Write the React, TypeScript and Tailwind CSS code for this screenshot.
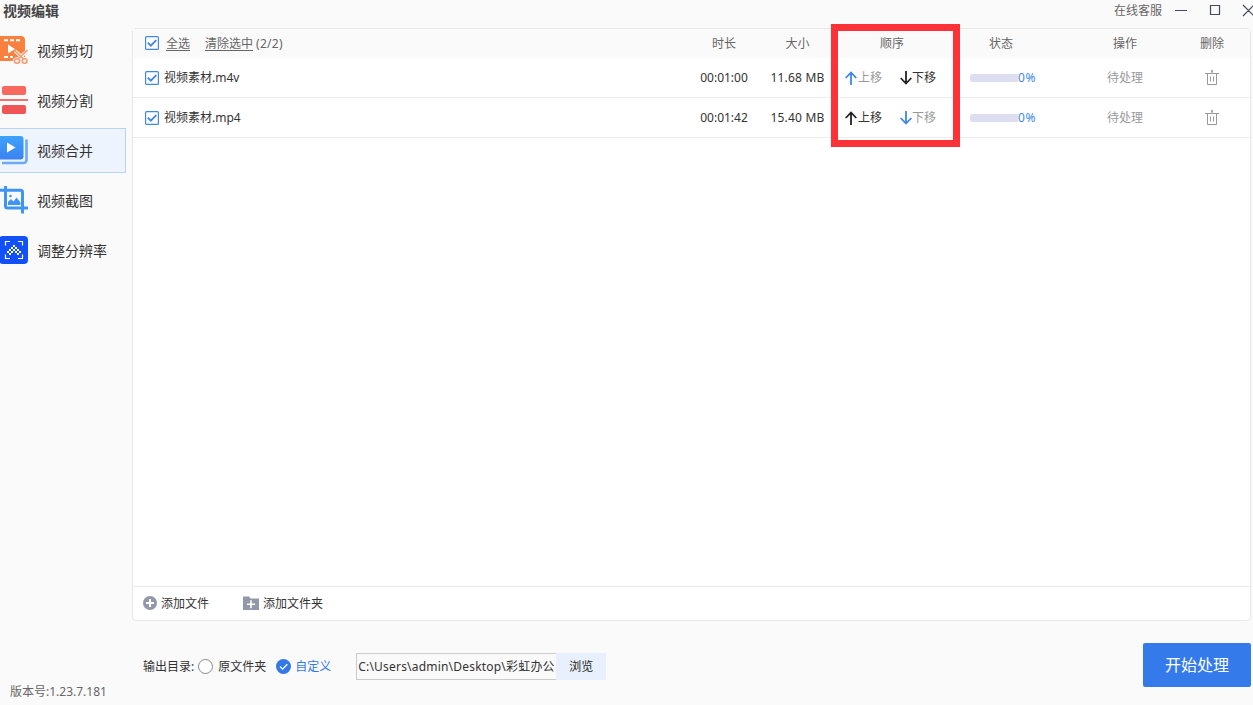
import React, { useState } from "react";
import clsx from "clsx";

type IconProps = { className?: string };

const CutIcon = () => (
  <svg width="28" height="30" viewBox="0 0 28 30" className="shrink-0">
    <rect x="-3" y="1" width="28" height="25" rx="4" fill="#f9803f" />
    <path d="M4 5.200h4M10 5.200h4M16 5.200h4M4 22h4M10 22h3" stroke="#fff" strokeWidth="2" />
    <path d="M8 9.500l7 4.500-7 4.500z" fill="#fff" />
    <g fill="none" stroke="#fdf3ee" strokeWidth="3.600">
      <path d="M15 16l9 8M27 16l-9 8" />
      <ellipse cx="17" cy="26" rx="2.600" ry="2" />
      <ellipse cx="24.600" cy="26" rx="2.600" ry="2" />
    </g>
    <g fill="none" stroke="#f79a72" strokeWidth="1.500">
      <path d="M14 15l9.500 9M27.500 15l-9.500 9" />
      <ellipse cx="17" cy="26" rx="2.600" ry="2.200" />
      <ellipse cx="24.600" cy="26" rx="2.400" ry="2.200" />
    </g>
  </svg>
);

const SplitIcon = () => (
  <svg width="28" height="30" viewBox="0 0 28 30" className="shrink-0">
    <rect x="2" y="1" width="24" height="9" rx="2" fill="#f8685f" />
    <rect x="0" y="14" width="28" height="2" fill="#f2726e" />
    <rect x="2" y="20" width="24" height="9" rx="2" fill="#ef5555" />
  </svg>
);

const MergeIcon = () => (
  <svg width="28" height="30" viewBox="0 0 28 30" className="shrink-0">
    <defs>
      <linearGradient id="merge" x1="0" y1="0" x2="0" y2="1">
        <stop offset="0" stopColor="#3ea2fb" />
        <stop offset="1" stopColor="#3b82f2" />
      </linearGradient>
    </defs>
    <path d="M26.500 4.500v20.500a3 3 0 0 1-3 3H2" fill="none" stroke="#6aaaf7" strokeWidth="2.600" />
    <rect x="-3" y="1" width="26.500" height="23.500" rx="3" fill="url(#merge)" />
    <path d="M7 7.500l8.500 5-8.500 5z" fill="#fff" />
  </svg>
);

const CropIcon = () => (
  <svg width="28" height="30" viewBox="0 0 28 30" className="shrink-0">
    <path d="M5.500 1v20a2 2 0 0 0 2 2H28M0 5.200h20.500a2 2 0 0 1 2 2V28.500" fill="none" stroke="#3f95f3" strokeWidth="3" />
    <circle cx="10.500" cy="11" r="1.300" fill="#3f95f3" />
    <path d="M8 20v-3l3-3 2.500 2.500 3-4 4 5v2.500z" fill="#3f95f3" />
  </svg>
);

const ResolutionIcon = () => (
  <svg width="28" height="30" viewBox="0 0 28 30" className="shrink-0">
    <rect x="-1" y="1" width="29" height="28" rx="4" fill="#1250fa" />
    <path d="M5.500 10.500V6.500H10M18 6.500h4.500v4M22.500 19.500v4H18M10 23.500H5.500v-4" fill="none" stroke="#fff" strokeWidth="1.200" />
    <path
      d="M13 10h2v2h-2zM11 12h2v2h-2zM15 12h2v2h-2zM9 14h2v2H9zM13 14h2v2h-2zM17 14h2v2h-2zM7 16h2v2H7zM11 16h2v2h-2zM15 16h2v2h-2zM19 16h2v2h-2zM9 18h2v2H9zM17 18h2v2h-2z"
      fill="#fff"
    />
  </svg>
);

const MENU = [
  { label: "视频剪切", icon: CutIcon },
  { label: "视频分割", icon: SplitIcon },
  { label: "视频合并", icon: MergeIcon },
  { label: "视频截图", icon: CropIcon },
  { label: "调整分辨率", icon: ResolutionIcon },
];

const FILES = [
  { name: "视频素材.m4v", duration: "00:01:00", size: "11.68 MB" },
  { name: "视频素材.mp4", duration: "00:01:42", size: "15.40 MB" },
];

const CheckBox = () => (
  <svg width="14" height="14" viewBox="0 0 14 14" className="shrink-0">
    <rect x="0.600" y="0.600" width="12.800" height="12.800" rx="1" fill="#fff" stroke="#4286ea" strokeWidth="1.200" />
    <path d="M2.800 6.700l3 3 5.500-5.500" fill="none" stroke="#4286ea" strokeWidth="1.900" />
  </svg>
);

const ArrowIcon = ({ className }: IconProps) => (
  <svg width="13" height="14" viewBox="0 0 13 14" className={clsx("shrink-0", className)}>
    <path d="M6 14V1.500M0.700 7L6 1.500 11.300 7" fill="none" stroke="currentColor" strokeWidth="1.800" />
  </svg>
);

const TrashIcon = () => (
  <svg width="14" height="16" viewBox="0 0 14 16" fill="none" stroke="#999" strokeWidth="1">
    <path d="M0 3.500h14M7 0.500v3M2.500 3.500v11h9v-11M5.500 6.500v5M8.500 6.500v5" />
    <path d="M6 1h2" strokeWidth="1.500" />
  </svg>
);

const COLUMNS = "grid grid-cols-[554px_74px_73px_116px_102px_146px_28px] items-center";

const App = () => {
  const [active, setActive] = useState(2);

  return (
    <div className="relative flex h-[705px] w-[1253px] overflow-hidden bg-[#fafafa] font-['Noto_Sans','Noto_Sans_CJK_SC',sans-serif] text-xs leading-4 text-[#333]">
      {/* Sidebar */}
      <aside className="flex w-[132px] shrink-0 flex-col">
        <h1 className="h-7 pl-[3px] text-sm leading-[22px] font-bold text-[#444]">视频编辑</h1>
        <nav className="flex flex-col gap-[5px]">
          {MENU.map(({ label, icon: Icon }, i) => (
            <button
              key={label}
              onClick={() => setActive(i)}
              className={clsx(
                "flex h-[45px] w-[126px] items-center gap-[9px] border border-l-0 pb-px text-sm",
                i === active ? "border-[#b9d3f5] bg-[#eef4fe]" : "border-transparent"
              )}
            >
              <Icon />
              <span className="pt-0.5">{label}</span>
            </button>
          ))}
        </nav>
        <div className="mt-auto pb-[5px] pl-2.5 text-[#666]">版本号:1.23.7.181</div>
      </aside>

      <main className="flex w-[1121px] flex-col">
        {/* Title bar */}
        <div className="flex h-7 items-start justify-end pt-[3px] text-[#666]">
          <span className="mr-[13px]">在线客服</span>
          <svg width="78" height="16" viewBox="0 0 78 16" fill="none" stroke="#444a5c" strokeWidth="1.200">
            <path d="M0 7.500h12M35.500 2.500h9v9h-9zM68 2l11 11M79 2L68 13" />
          </svg>
        </div>

        {/* File list */}
        <section className="flex h-[593px] w-[1119px] flex-col rounded-sm border border-[#e8e8e8] bg-white">
          <div className={clsx(COLUMNS, "h-[29px] bg-[#fafafa] text-center text-[#666]")}>
            <div className="flex items-center pl-3">
              <div className="pb-0.5">
                <CheckBox />
              </div>
              <button className="ml-[7px] underline underline-offset-2">全选</button>
              <button className="mr-[3px] ml-[15px] underline underline-offset-2">清除选中</button>
              <span className="tracking-[0.3px]">(2/2)</span>
            </div>
            <div>时长</div>
            <div>大小</div>
            <div>顺序</div>
            <div>状态</div>
            <div>操作</div>
            <div>删除</div>
          </div>

          {FILES.map((file, i) => {
            const first = i === 0;
            const last = i === FILES.length - 1;
            return (
              <div key={file.name} className={clsx(COLUMNS, "h-10 border-b border-[#ececec]")}>
                <div className="flex items-center gap-[5px] pl-3">
                  <CheckBox />
                  {file.name}
                </div>
                <div className="text-center">{file.duration}</div>
                <div className="text-center tracking-[0.2px]">{file.size}</div>
                <div className="flex items-center pl-[11px]">
                  <button className={clsx("flex w-[54px] items-center", first && "text-[#999]")}>
                    <ArrowIcon className={first ? "text-[#3d86ea]" : "text-[#222]"} />
                    上移
                  </button>
                  <button className={clsx("flex items-center", last && "text-[#999]")}>
                    <ArrowIcon className={clsx("rotate-180", last ? "text-[#3d86ea]" : "text-[#222]")} />
                    下移
                  </button>
                </div>
                <div className="flex items-center pl-5 tracking-[0.6px] text-[#3d86ea]">
                  <div className="h-2 w-12 rounded-l-xs bg-[#dddff0]" />
                  0%
                </div>
                <div className="text-center text-[#999]">待处理</div>
                <button className="flex justify-center">
                  <TrashIcon />
                </button>
              </div>
            );
          })}

          <div className="mt-auto flex h-[34px] items-center border-t border-[#e8e8e8] pb-px pl-2.5">
            <button className="flex items-center gap-[3px]">
              <svg width="15" height="14" viewBox="0 0 15 14">
                <circle cx="7" cy="7" r="7" fill="#9098a9" />
                <path d="M7 3v8M3 7h8" stroke="#fff" strokeWidth="2" />
              </svg>
              <span className="pt-0.5">添加文件</span>
            </button>
            <button className="ml-[34px] flex items-center gap-1">
              <svg width="16" height="14" viewBox="0 0 16 14">
                <path d="M0 0.500h6l1.500 2H16V14H0z" fill="#9098a9" />
                <path d="M8 4.200v8M4 8.200h8" stroke="#fff" strokeWidth="1.600" />
              </svg>
              <span className="pt-0.5">添加文件夹</span>
            </button>
          </div>
        </section>

        {/* Output settings */}
        <footer className="mt-[22px] flex h-11 w-[1119px] items-center pl-[11px]">
          <div className="flex items-center pt-[3px]">
            <span>输出目录:</span>
            <span className="ml-1 size-[15px] rounded-full border border-[#888] bg-white" />
            <span className="ml-[5px]">原文件夹</span>
            <svg width="15" height="15" viewBox="0 0 15 15" className="ml-[10px]">
              <circle cx="7.500" cy="7.500" r="7.500" fill="#3478e8" />
              <path d="M4 7.500l2.600 2.600 4.700-4.900" fill="none" stroke="#fff" strokeWidth="1.300" />
            </svg>
            <span className="ml-1 text-[#3478e8]">自定义</span>
          </div>
          <div className="mt-[3px] ml-[25px] flex h-[27px] w-[200px] items-center overflow-hidden border border-r-0 border-[#ccc] pt-px pl-px tracking-[0.2px] whitespace-nowrap">
            C:\Users\admin\Desktop\彩虹办公
          </div>
          <button className="mt-[3px] h-[27px] w-[50px] bg-[#e8f0fe] text-[#222]">浏览</button>
          <button className="ml-auto h-11 w-[108px] rounded-xs bg-[#347aeb] text-base text-white">开始处理</button>
        </footer>
      </main>

      {/* Highlight around the order column */}
      <div className="pointer-events-none absolute top-6 left-[831px] h-[123px] w-[129px] border-7 border-[#fb3338]" />
    </div>
  );
};

export default App;
